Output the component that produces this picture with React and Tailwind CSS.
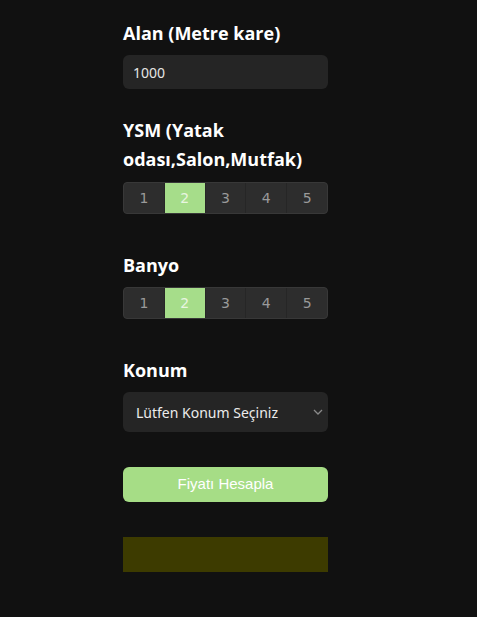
import React from "react";

function Seg({ selected }) {
  return (
    <div className="flex h-[32px] w-[205px] rounded-[4px] border border-[#383838] bg-[#2d2d2d] overflow-hidden">
      {[1, 2, 3, 4, 5].map((n, i) => (
        <div
          key={n}
          className={
            "flex flex-1 items-center justify-center text-[14px] font-['DejaVu_Sans',sans-serif] " +
            (n === selected ? "bg-[#a6dd8a] text-[#e8f5e0] " : "text-[#9a9a9a] ") +
            (i > 0 ? "border-l border-[#262626]" : "")
          }
        >
          {n}
        </div>
      ))}
    </div>
  );
}

export default function App() {
  return (
    <div className="min-h-[617px] w-full bg-[#111111] pl-[123px]">
      <div className="w-[205px] flex flex-col pt-[19px] font-['Open_Sans',sans-serif]">
        <h2 className="text-[18px] font-bold leading-[28px] text-white">Alan (Metre kare)</h2>
        <div className="mt-[8px] h-[34px] rounded-[6px] bg-[#252525] flex items-center px-[10px] text-[14px] text-[#e6e6e6] font-['Noto_Sans',sans-serif]">
          1000
        </div>
        <h2 className="mt-[27px] text-[18px] font-bold leading-[29px] text-white">
          YSM (Yatak odası,Salon,Mutfak)
        </h2>
        <div className="mt-[8px]">
          <Seg selected={2} />
        </div>
        <h2 className="mt-[37px] text-[18px] font-bold leading-[28px] text-white">Banyo</h2>
        <div className="mt-[8px]">
          <Seg selected={2} />
        </div>
        <h2 className="mt-[37px] text-[18px] font-bold leading-[28px] text-white">Konum</h2>
        <div className="mt-[8px] h-[40px] rounded-[6px] bg-[#252525] flex items-center pl-[13px] pr-[5px] text-[14px] text-[#ececec] font-['Noto_Sans',sans-serif]">
          <span className="flex-1">Lütfen Konum Seçiniz</span>
          <svg width="10" height="6" viewBox="0 0 10 6" fill="none">
            <path d="M1 1l4 4 4-4" stroke="#8a8a8a" strokeWidth="1.3" />
          </svg>
        </div>
        <button className="mt-[35px] h-[35px] rounded-[6px] bg-[#a6dd86] text-white text-[15px] font-['Liberation_Sans',sans-serif]">
          Fiyatı Hesapla
        </button>
        <div className="mt-[35px] h-[35px] bg-[#3d3b00]" />
      </div>
    </div>
  );
}
